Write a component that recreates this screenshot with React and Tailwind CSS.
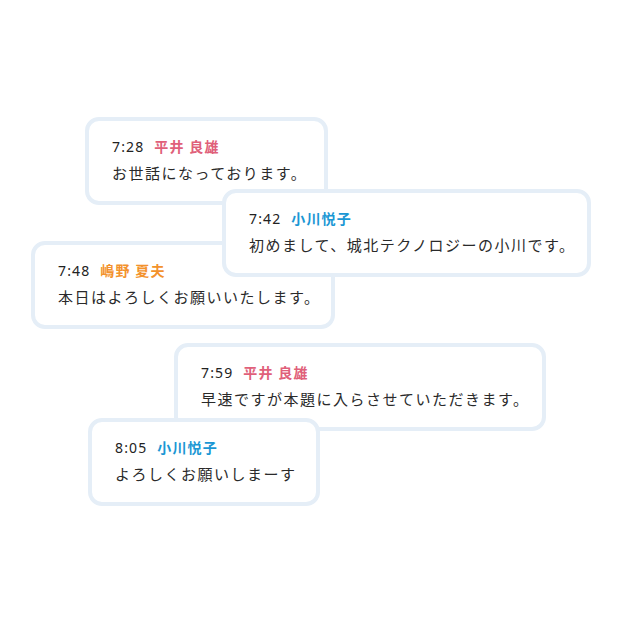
const messages = [
  { time: "7:28", name: "平井 良雄", color: "text-[#e0607a]", text: "お世話になっております。", pos: "left-[85px] top-[117px] w-[243px] z-10" },
  { time: "7:48", name: "嶋野 夏夫", color: "text-[#f3922c]", text: "本日はよろしくお願いいたします。", pos: "left-[31px] top-[241px] w-[304px] z-10" },
  { time: "7:42", name: "小川悦子", color: "text-[#1b97d4]", text: "初めまして、城北テクノロジーの小川です。", pos: "left-[222px] top-[189px] w-[369px] z-20" },
  { time: "7:59", name: "平井 良雄", color: "text-[#e0607a]", text: "早速ですが本題に入らさせていただきます。", pos: "left-[174px] top-[343px] w-[372px] z-30" },
  { time: "8:05", name: "小川悦子", color: "text-[#1b97d4]", text: "よろしくお願いしまーす", pos: "left-[88px] top-[418px] w-[232px] z-40" },
];

const Bubble = ({ item }) => {
  return (
    <div className={"absolute h-[88px] rounded-[14px] border-4 border-[#e5eef7] bg-white pl-[23px] pr-4 pt-4 " + item.pos}>
      <div className="flex items-center gap-[10px] text-[14px] leading-[20px]">
        <span className="text-[#222] tracking-[0.08em]">{item.time}</span>
        <span className={"font-semibold tracking-[0.08em] " + item.color}>{item.name}</span>
      </div>
      <div className="mt-[5px] text-[15px] leading-[22px] tracking-[0.1em] text-[#2a2a2a] whitespace-nowrap">{item.text}</div>
    </div>
  );
};

export default function App() {
  return (
    <div
      className="relative w-[623px] h-[624px] bg-white"
      style={{ fontFamily: '"Noto Sans", "Noto Sans CJK JP", sans-serif' }}
    >
      {messages.map((item, index) => (
        <Bubble key={"msg" + index} item={item} />
      ))}
    </div>
  );
}
